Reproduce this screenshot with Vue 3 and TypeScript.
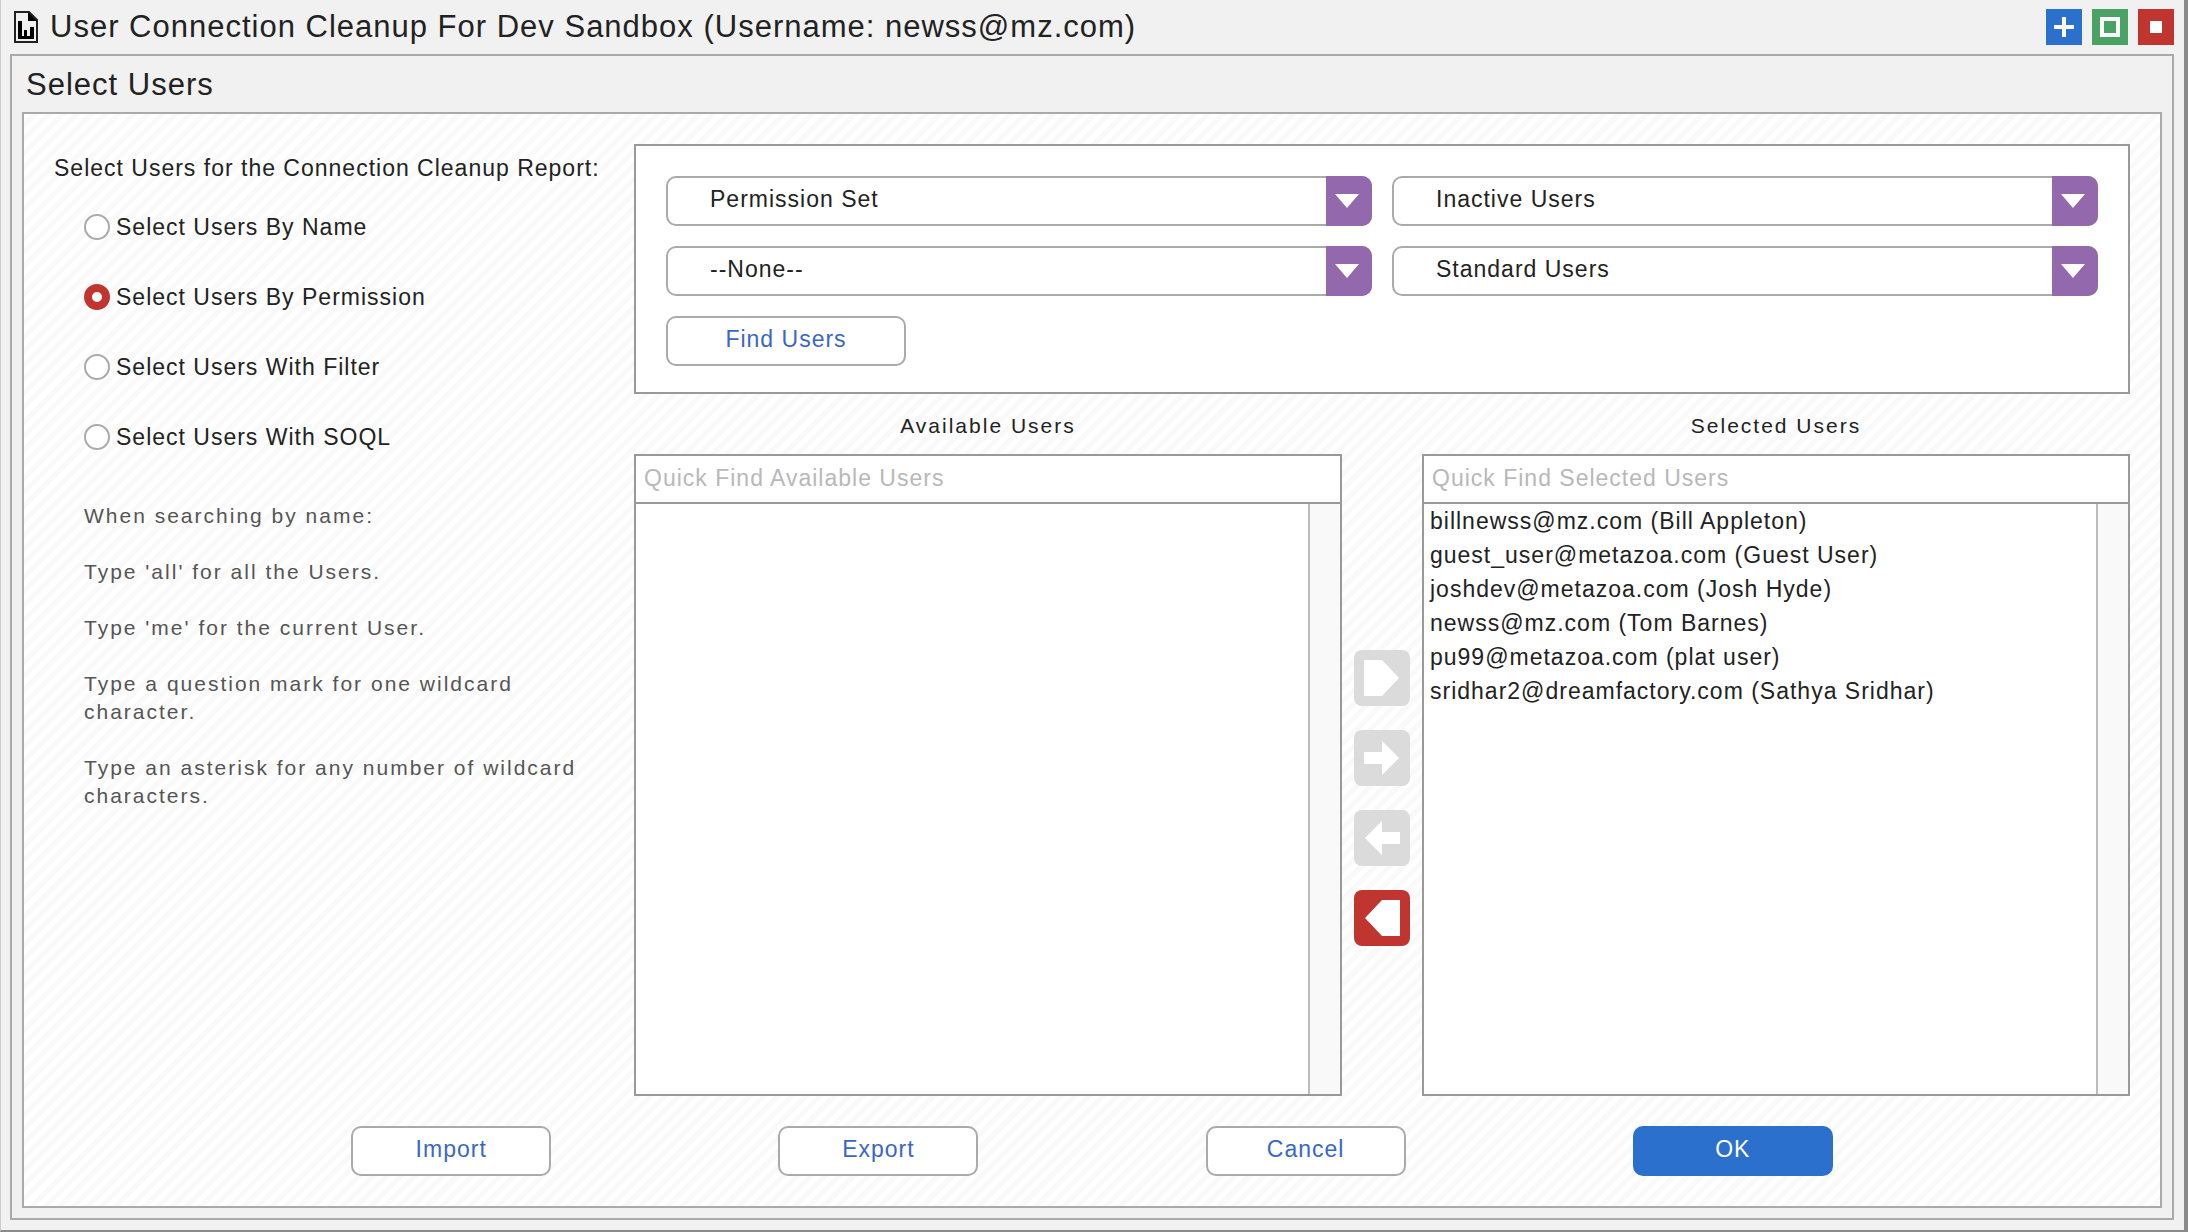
<script setup lang="ts">
import { ref } from 'vue'

interface Choice {
  value: string
  label: string
}

interface Filter {
  id: string
  label: string
  options: string[]
}

const modes: Choice[] = [
  { value: 'name', label: 'Select Users By Name' },
  { value: 'permission', label: 'Select Users By Permission' },
  { value: 'filter', label: 'Select Users With Filter' },
  { value: 'soql', label: 'Select Users With SOQL' },
]
const mode = ref<string>('permission')

const hints: string[] = [
  'When searching by name:',
  "Type 'all' for all the Users.",
  "Type 'me' for the current User.",
  'Type a question mark for one wildcard character.',
  'Type an asterisk for any number of wildcard characters.',
]

const filters: Filter[] = [
  { id: 'source', label: 'Permission source', options: ['Permission Set'] },
  { id: 'activity', label: 'User activity', options: ['Inactive Users'] },
  { id: 'permission', label: 'Permission', options: ['--None--'] },
  { id: 'type', label: 'User type', options: ['Standard Users'] },
]

const available = ref<string[]>([])
const selected = ref<string[]>([
  'billnewss@mz.com (Bill Appleton)',
  'guest_user@metazoa.com (Guest User)',
  'joshdev@metazoa.com (Josh Hyde)',
  'newss@mz.com (Tom Barnes)',
  'pu99@metazoa.com (plat user)',
  'sridhar2@dreamfactory.com (Sathya Sridhar)',
])

const moves = [
  { label: 'Add all users', shape: '10,10 28,10 45,28 28,46 10,46', enabled: false },
  { label: 'Add user', shape: '10,22 28,22 28,11 45,28 28,45 28,34 10,34', enabled: false },
  { label: 'Remove user', shape: '46,22 28,22 28,11 11,28 28,45 28,34 46,34', enabled: false },
  { label: 'Remove all users', shape: '46,10 28,10 11,28 28,46 46,46', enabled: true },
]

const actions = ['Import', 'Export', 'Cancel', 'OK']
</script>

<template>
  <main class="window">
    <header class="titlebar">
      <svg class="doc-icon" viewBox="0 0 24 32" aria-hidden="true">
        <path d="M1 1H15L23 9V31H1Z" fill="#f1f1f1" stroke="#222" stroke-width="2" />
        <path d="M14 1L23 10H14Z" fill="#000" />
        <path d="M4 10H8V25H10V19H13V25H16V16H20V28H4Z" fill="#000" />
      </svg>
      <h1>User Connection Cleanup For Dev Sandbox (Username: newss@mz.com)</h1>
      <div class="window-controls">
        <button type="button" class="plus" aria-label="New window">
          <svg viewBox="0 0 36 36"><path d="M8 18H28M18 8V28" stroke="#fff" stroke-width="4" /></svg>
        </button>
        <button type="button" class="maximize" aria-label="Maximize">
          <svg viewBox="0 0 36 36"><rect x="10" y="10" width="16" height="16" fill="none" stroke="#fff" stroke-width="4" /></svg>
        </button>
        <button type="button" class="close" aria-label="Close">
          <svg viewBox="0 0 36 36"><rect x="12" y="12" width="12" height="12" fill="#fff" /></svg>
        </button>
      </div>
    </header>

    <section class="frame">
      <h2>Select Users</h2>
      <div class="content">
        <div class="columns">
          <aside class="sidebar">
            <fieldset>
              <legend>Select Users for the Connection Cleanup Report:</legend>
              <label v-for="m in modes" :key="m.value" class="mode">
                <input v-model="mode" type="radio" name="mode" :value="m.value" />
                <span>{{ m.label }}</span>
              </label>
            </fieldset>
            <div class="hints">
              <p v-for="h in hints" :key="h">{{ h }}</p>
            </div>
          </aside>

          <div class="workspace">
            <form class="filters" @submit.prevent>
              <div v-for="f in filters" :key="f.id" class="dropdown">
                <select :id="f.id" :aria-label="f.label">
                  <option v-for="o in f.options" :key="o">{{ o }}</option>
                </select>
                <svg class="arrow" viewBox="0 0 46 50" aria-hidden="true">
                  <polygon points="9,18 33,18 21,32" fill="#fff" />
                </svg>
              </div>
              <button type="submit" class="btn find">Find Users</button>
            </form>

            <div class="picker">
              <div class="list-group">
                <h3 id="available-title">Available Users</h3>
                <div class="list-box">
                  <input type="text" placeholder="Quick Find Available Users" aria-label="Quick Find Available Users" />
                  <div class="list-body">
                    <ul aria-labelledby="available-title">
                      <li v-for="u in available" :key="u">{{ u }}</li>
                    </ul>
                    <div class="track"></div>
                  </div>
                </div>
              </div>

              <div class="moves">
                <button
                  v-for="m in moves"
                  :key="m.label"
                  type="button"
                  :aria-label="m.label"
                  :disabled="!m.enabled"
                >
                  <svg viewBox="0 0 56 56"><polygon :points="m.shape" fill="#fff" /></svg>
                </button>
              </div>

              <div class="list-group">
                <h3 id="selected-title">Selected Users</h3>
                <div class="list-box">
                  <input type="text" placeholder="Quick Find Selected Users" aria-label="Quick Find Selected Users" />
                  <div class="list-body">
                    <ul aria-labelledby="selected-title">
                      <li v-for="u in selected" :key="u">{{ u }}</li>
                    </ul>
                    <div class="track"></div>
                  </div>
                </div>
              </div>
            </div>
          </div>
        </div>

        <footer class="actions">
          <div v-for="a in actions" :key="a">
            <button type="button" class="btn" :class="{ primary: a === 'OK' }">{{ a }}</button>
          </div>
        </footer>
      </div>
    </section>
  </main>
</template>

<style>
body {
  margin: 0;
}
</style>

<style scoped>
* {
  box-sizing: border-box;
}

.window {
  display: flex;
  flex-direction: column;
  min-height: 100vh;
  padding: 0 10px 10px 9px;
  border: solid #8a8a8a;
  border-width: 0 4px 2px 0;
  border-left: 1px solid #ccc;
  background: #f1f1f1;
  color: #222;
  font-family: "Liberation Sans", Arial, sans-serif;
  font-size: 23px;
  letter-spacing: 1px;
}

h1,
h2,
h3,
p,
ul,
fieldset {
  margin: 0;
  padding: 0;
  border: 0;
  font-weight: 400;
}

button,
input,
select {
  margin: 0;
  font: inherit;
  letter-spacing: inherit;
}

svg {
  display: block;
}

.titlebar {
  display: flex;
  align-items: center;
  height: 54px;
  padding-left: 4px;
}

.doc-icon {
  width: 24px;
  height: 32px;
}

h1,
h2 {
  font-size: 31px;
  line-height: 36px;
}

h1 {
  flex: 1;
  margin-left: 12px;
}

.window-controls {
  display: flex;
  gap: 10px;
}

.window-controls button {
  width: 36px;
  height: 36px;
  padding: 0;
  border: 0;
}

.plus {
  background: #2b70cd;
}

.maximize {
  background: #4aa265;
}

.close {
  background: #c03530;
}

.frame {
  display: flex;
  flex: 1;
  flex-direction: column;
  padding: 0 10px 10px;
  border: 2px solid #aaa;
}

h2 {
  padding: 11px 4px 9px;
}

.content {
  display: flex;
  flex: 1;
  flex-direction: column;
  padding: 30px 0;
  border: 2px solid #aaa;
  background: repeating-linear-gradient(135deg, #fff 0 5px, #f9f9f9 5px 10px);
}

.columns {
  display: flex;
  flex: 1;
  padding-right: 30px;
}

.sidebar {
  flex: none;
  width: 610px;
  padding-left: 30px;
}

legend {
  padding: 10px 0 30px;
  line-height: 28px;
  white-space: nowrap;
}

.mode {
  display: flex;
  align-items: center;
  gap: 6px;
  height: 30px;
  margin: 0 0 40px 30px;
}

.mode input {
  width: 26px;
  height: 26px;
  border: 2px solid #aaa;
  border-radius: 50%;
  background: #fff;
  appearance: none;
}

.mode input:checked {
  border: 8px solid #c03530;
}

.hints {
  display: grid;
  gap: 28px;
  margin: 10px 30px 0;
  color: #555;
  font-size: 21px;
  line-height: 28px;
  letter-spacing: 2px;
}

.workspace {
  display: flex;
  flex: 1;
  flex-direction: column;
  min-width: 0;
}

.filters {
  display: grid;
  grid-template-columns: 1fr 1fr;
  gap: 20px;
  padding: 30px;
  padding-bottom: 26px;
  border: 2px solid #999;
  background: #fff;
}

.dropdown {
  position: relative;
}

select {
  display: block;
  width: 100%;
  height: 50px;
  padding: 0 60px 4px 42px;
  border: 2px solid #aaa;
  border-radius: 10px;
  background: #fff;
  color: #222;
  appearance: none;
}

.arrow {
  position: absolute;
  top: 0;
  right: 0;
  width: 46px;
  height: 50px;
  border-radius: 0 10px 10px 0;
  background: #9368ad;
  pointer-events: none;
}

.btn {
  width: 200px;
  height: 50px;
  padding: 0 0 4px;
  border: 2px solid #aaa;
  border-radius: 10px;
  background: #fff;
  color: #3a67c6;
}

.find {
  width: 240px;
}

.primary {
  border-color: #2b70cd;
  background: #2b70cd;
  color: #fff;
}

.picker {
  display: flex;
  flex: 1;
}

.list-group {
  display: flex;
  flex: 1;
  flex-direction: column;
  min-width: 0;
}

h3 {
  padding: 18px 0 14px;
  font-size: 21px;
  line-height: 28px;
  letter-spacing: 2px;
  text-align: center;
}

.list-box {
  display: flex;
  flex: 1;
  flex-direction: column;
  border: 2px solid #999;
  background: #fff;
}

.list-box input {
  width: 100%;
  height: 48px;
  padding: 0 8px 2px;
  border: 0;
  border-bottom: 2px solid #999;
  outline: 0;
  background: #fff;
}

.list-box input::placeholder {
  color: #b8b8b8;
  opacity: 1;
}

.list-body {
  display: flex;
  flex: 1;
}

ul {
  flex: 1;
  padding: 0 6px;
  list-style: none;
}

li {
  line-height: 34px;
}

.track {
  width: 32px;
  border-left: 2px solid #bbb;
  background: #f9f9f9;
}

.moves {
  display: flex;
  flex: none;
  flex-direction: column;
  align-items: center;
  justify-content: center;
  gap: 24px;
  width: 80px;
  padding-top: 106px;
}

.moves button {
  width: 56px;
  height: 56px;
  padding: 0;
  border: 0;
  border-radius: 8px;
  background: #c03530;
}

.moves button:disabled {
  background: #dbdbdb;
}

.actions {
  display: grid;
  grid-template-columns: repeat(4, 1fr);
  padding: 30px 10% 0;
  text-align: center;
}
</style>
